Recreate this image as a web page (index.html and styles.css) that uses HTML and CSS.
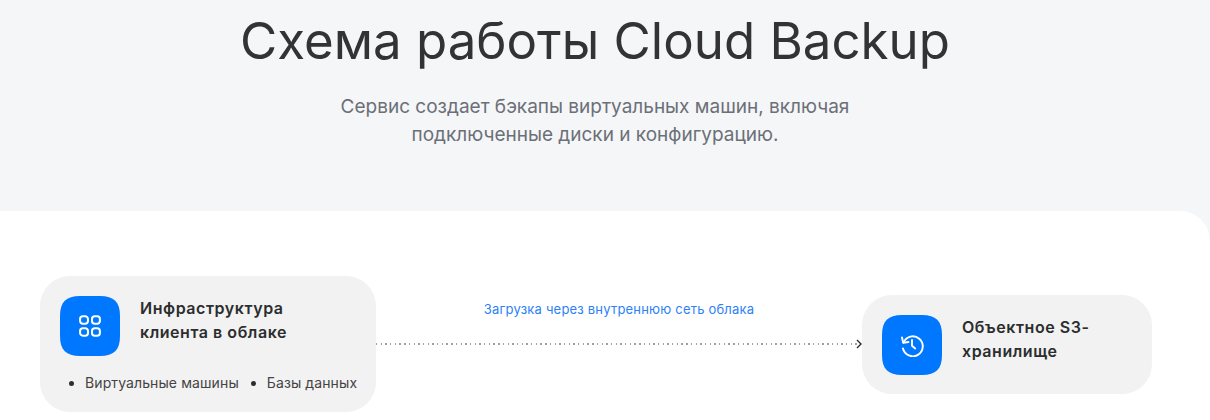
FILE: index.html
```html
<!DOCTYPE html>
<html lang="ru">
<head>
<meta charset="utf-8">
<title>Схема работы Cloud Backup</title>
<link rel="stylesheet" href="styles.css">
</head>
<body>
<header class="hero">
  <h1 class="hero-title">Схема работы Cloud Backup</h1>
  <p class="hero-text">Сервис создает бэкапы виртуальных машин, включая<br>подключенные диски и конфигурацию.</p>
</header>
<main class="panel">
  <section class="card card-client">
    <div class="card-head">
      <span class="tile">
        <svg class="tile-bg" viewBox="0 0 60 60"><path d="M20 0H40C54 0 60 6 60 20V40C60 54 54 60 40 60H20C6 60 0 54 0 40V20C0 6 6 0 20 0Z" fill="#0077ff"/></svg>
        <svg class="tile-icon" viewBox="0 0 24 24" fill="none" stroke="#fff" stroke-width="2.2"><rect x="1.2" y="1.4" width="8.6" height="8.2" rx="3"/><rect x="14.2" y="1.4" width="8.6" height="8.2" rx="3"/><rect x="1.2" y="14.4" width="8.6" height="8.2" rx="3"/><rect x="14.2" y="14.4" width="8.6" height="8.2" rx="3"/></svg>
      </span>
      <h2 class="card-title">Инфраструктура<br>клиента в облаке</h2>
    </div>
    <ul class="card-list">
      <li class="card-item">Виртуальные машины</li>
      <li class="card-item">Базы данных</li>
    </ul>
  </section>
  <div class="link">
    <span class="link-label">Загрузка через внутреннюю сеть облака</span>
    <span class="link-line"><svg class="link-arrow" viewBox="0 0 6 10" fill="none" stroke="#2c2d2e" stroke-width="1.4"><path d="M1 1 5 5 1 9"/></svg></span>
  </div>
  <section class="card card-storage">
    <div class="card-head">
      <span class="tile">
        <svg class="tile-bg" viewBox="0 0 60 60"><path d="M20 0H40C54 0 60 6 60 20V40C60 54 54 60 40 60H20C6 60 0 54 0 40V20C0 6 6 0 20 0Z" fill="#0077ff"/></svg>
        <svg class="tile-icon tile-icon-wide" viewBox="0 0 24 24" fill="none" stroke="#fff" stroke-width="1.9" stroke-linecap="round" stroke-linejoin="round"><path d="M3.5 9.5A10 10 0 1 1 3 15.5"/><path d="M2 4.5 3.2 9.8 8.5 9"/><path d="M12 7v5.8l3.2 2.7"/></svg>
      </span>
      <h2 class="card-title">Объектное S3-<br>хранилище</h2>
    </div>
  </section>
</main>
</body>
</html>
```

FILE: styles.css
```css
* { box-sizing: border-box; }
html, body { margin: 0; padding: 0; height: 420px; overflow: hidden; }
body { background: #f5f6f8; font-family: "Inter", "Noto Sans", sans-serif; color: #2c2d2e; }
.hero { height: 211px; padding: 9px 20px 0 0; text-align: center; }
.hero-title { margin: 0; font-size: 51px; line-height: 64px; font-weight: 400; color: #333; }
.hero-text { margin: 20px 0 0; font-size: 19px; line-height: 28px; color: #6b6f76; }
.panel { display: flex; align-items: center; height: 209px; padding: 63px 58px 6px 40px; background: #fff; border-radius: 0 30px 0 0; }
.card { background: #f2f2f2; border-radius: 30px; padding: 20px; flex: none; }
.card-client { width: 336px; height: 136px; }
.card-storage { width: 290px; height: 99px; }
.card-head { display: flex; align-items: center; gap: 20px; }
.tile { position: relative; display: flex; align-items: center; justify-content: center; flex: none; width: 60px; height: 60px; }
.tile-bg { position: absolute; inset: 0; width: 60px; height: 60px; }
.tile-icon { position: relative; width: 22px; height: 22px; }
.tile-icon-wide { width: 24px; height: 24px; }
.card-title { margin: 0 0 12px; font-size: 16px; line-height: 24px; font-weight: 600; letter-spacing: .55px; color: #2c2d2e; }
.card-list { display: flex; gap: 12px; margin: 15px 0 0; padding: 0 0 0 9px; list-style: none; font-size: 14px; line-height: 24px; letter-spacing: .1px; color: #444; white-space: nowrap; }
.card-item { position: relative; padding-left: 16px; }
.card-item::before { content: ""; position: absolute; left: 0; top: 10px; width: 5px; height: 5px; border-radius: 50%; background: #2c2d2e; }
.link { flex: 1; display: flex; flex-direction: column; align-items: center; }
.link-label { font-size: 13px; line-height: 18px; letter-spacing: .2px; color: #2d81f7; margin-bottom: 25px; }
.link-line { position: relative; align-self: stretch; height: 2px; background: repeating-linear-gradient(90deg, #a0a0a0 0 1.4px, transparent 1.4px 4.7px); margin-bottom: 44px; }
.link-arrow { position: absolute; right: 0; top: -4px; width: 6px; height: 10px; }
```
